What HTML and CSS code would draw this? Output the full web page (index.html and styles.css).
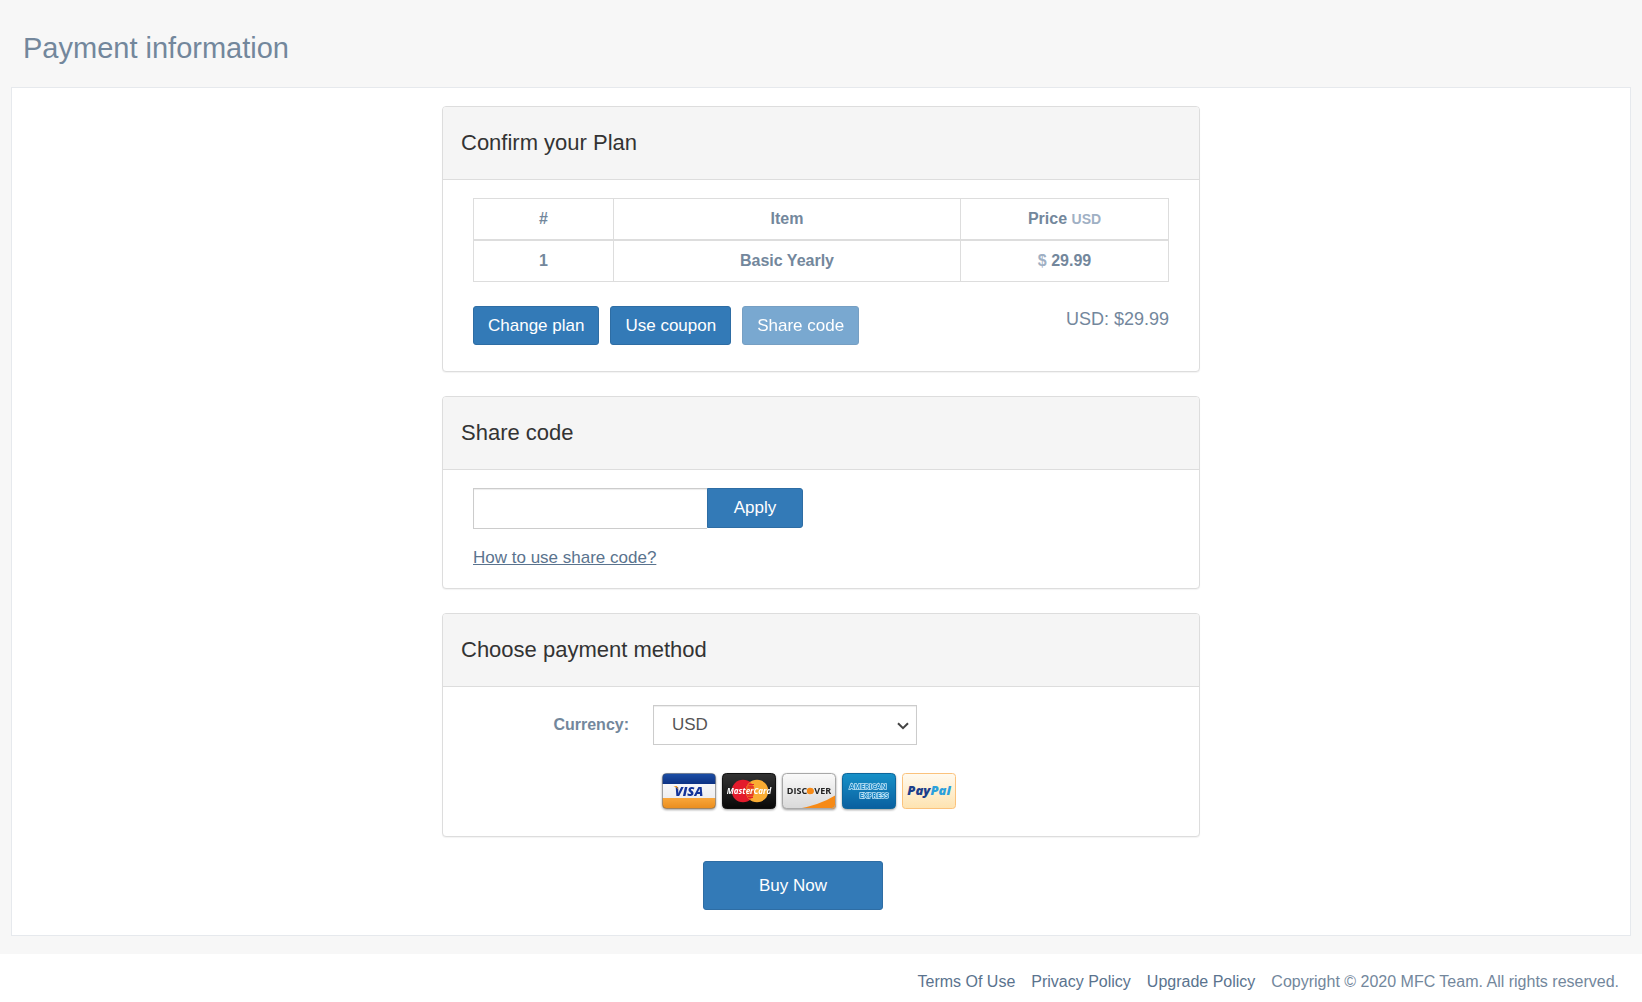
FILE: index.html
```html
<!DOCTYPE html>
<html lang="en">
<head>
<meta charset="utf-8">
<meta name="viewport" content="width=device-width, initial-scale=1">
<title>Payment information</title>
<link rel="stylesheet" href="styles.css">
</head>
<body>
<main class="page">
  <h1 class="page-title">Payment information</h1>
  <form class="panel">
    <section class="card">
      <h2 class="card-head">Confirm your Plan</h2>
      <div class="card-body">
        <table class="plan">
          <colgroup><col class="col-num"><col class="col-item"><col class="col-price"></colgroup>
          <thead>
            <tr><th>#</th><th>Item</th><th>Price <span class="unit">USD</span></th></tr>
          </thead>
          <tbody>
            <tr><td>1</td><td>Basic Yearly</td><td><span class="sign">$</span> 29.99</td></tr>
          </tbody>
        </table>
        <div class="plan-actions">
          <div class="buttons">
            <button type="button" class="btn">Change plan</button>
            <button type="button" class="btn">Use coupon</button>
            <button type="button" class="btn" disabled>Share code</button>
          </div>
          <p class="total">USD: $29.99</p>
        </div>
      </div>
    </section>

    <section class="card">
      <h2 class="card-head">Share code</h2>
      <div class="card-body share">
        <div class="code-row">
          <input type="text" class="code-input" aria-label="Share code">
          <button type="button" class="btn btn-apply">Apply</button>
        </div>
        <a href="#" class="help">How to use share code?</a>
      </div>
    </section>

    <section class="card">
      <h2 class="card-head">Choose payment method</h2>
      <div class="card-body method">
        <label class="currency-label" for="currency">Currency:</label>
        <div class="select-wrap">
          <select id="currency" class="currency"><option>USD</option></select>
          <svg class="chevron" viewBox="0 0 12 8" aria-hidden="true"><path d="M1 1.200 6 6.200 11 1.200" fill="none" stroke="#444" stroke-width="2"/></svg>
        </div>
        <div class="brands">
          <svg class="brand" viewBox="0 0 54 37" role="img" aria-label="Visa">
            <defs>
              <linearGradient id="vb" x2="0" y2="1"><stop stop-color="#1d50a8"/><stop offset="1" stop-color="#0c3283"/></linearGradient>
              <linearGradient id="vo" x2="0" y2="1"><stop stop-color="#f9a63a"/><stop offset="1" stop-color="#e98c1c"/></linearGradient>
              <linearGradient id="vw" x2="0" y2="1"><stop stop-color="#fff"/><stop offset="1" stop-color="#e6e6ea"/></linearGradient>
              <clipPath id="cc"><rect x=".5" y=".5" width="53" height="35" rx="4"/></clipPath>
            </defs>
            <g clip-path="url(#cc)">
              <path fill="url(#vw)" d="M0 0h54v36H0z"/>
              <path fill="url(#vb)" d="M0 0h54v11H0z"/>
              <path fill="url(#vo)" d="M0 25h54v11H0z"/>
            </g>
            <rect x=".5" y=".5" width="53" height="35" rx="4" fill="none" stroke="#555" stroke-opacity=".45"/>
            <text x="27" y="23" class="logo-visa">VISA</text>
            <path d="M11.500 13h3.500l1.500 4q-1.300-2.700-5-4" fill="#f39a1f"/>
          </svg>
          <svg class="brand" viewBox="0 0 54 37" role="img" aria-label="MasterCard">
            <defs><linearGradient id="mk" x2="0" y2="1"><stop stop-color="#333"/><stop offset="1" stop-color="#080808"/></linearGradient></defs>
            <rect x=".5" y=".5" width="53" height="35" rx="4" fill="url(#mk)" stroke="#111"/>
            <circle cx="21" cy="18" r="11.300" fill="#e31b2c"/>
            <circle cx="35" cy="18" r="11.300" fill="#f9ac33"/>
            <path d="M28 9.100a11.300 11.300 0 0 1 0 17.800 11.300 11.300 0 0 1 0-17.800" fill="#ea5a24"/>
            <path d="M27 11.500h5M26 14h6M25 22h6M26 24.500h5" stroke="#e31b2c" stroke-width="1"/>
            <text x="27" y="21" class="logo-mc">MasterCard</text>
          </svg>
          <svg class="brand" viewBox="0 0 54 37" role="img" aria-label="Discover">
            <defs><linearGradient id="dg" x2="0" y2="1"><stop stop-color="#fafafa"/><stop offset="1" stop-color="#d9d9d9"/></linearGradient></defs>
            <rect x=".5" y=".5" width="53" height="35" rx="4" fill="url(#dg)"/>
            <path d="M15 36Q38 32 54 22v10q0 4-4 4z" fill="#f68a16"/>
            <rect x=".5" y=".5" width="53" height="35" rx="4" fill="none" stroke="#a8a8a8"/>
            <text x="27" y="21" class="logo-disc">DISC<tspan fill="#f68a16">O</tspan>VER</text>
            <circle cx="28" cy="18" r="3.200" fill="#f68a16"/>
          </svg>
          <svg class="brand" viewBox="0 0 54 37" role="img" aria-label="American Express">
            <defs><linearGradient id="ab" x2="0" y2="1"><stop stop-color="#1791c8"/><stop offset="1" stop-color="#0a5f9f"/></linearGradient></defs>
            <rect x=".5" y=".5" width="53" height="35" rx="4" fill="url(#ab)" stroke="#0c669c"/>
            <text x="26" y="16" class="logo-amex">AMERICAN</text>
            <text x="32" y="25" class="logo-amex">EXPRESS</text>
          </svg>
          <svg class="brand" viewBox="0 0 54 37" role="img" aria-label="PayPal">
            <defs><linearGradient id="pp" x2="0" y2="1"><stop stop-color="#fffaf0"/><stop offset="1" stop-color="#fee3b0"/></linearGradient></defs>
            <rect x=".5" y=".5" width="53" height="35" rx="3" fill="url(#pp)" stroke="#fbc27c"/>
            <text x="27" y="22" class="logo-pp">Pay<tspan fill="#2aa0dc">Pal</tspan></text>
          </svg>
        </div>
      </div>
    </section>
    <div class="submit"><button type="submit" class="btn btn-buy">Buy Now</button></div>
  </form>
</main>
<footer class="footer">
  <a href="#">Terms Of Use</a>
  <a href="#">Privacy Policy</a>
  <a href="#">Upgrade Policy</a>
  <span class="copy">Copyright © 2020 MFC Team. All rights reserved.</span>
</footer>
</body>
</html>
```
FILE: styles.css
```css
* { box-sizing: border-box; }

body {
  margin: 0;
  background: #fff;
  color: #73879c;
  font: 17px/24px "Liberation Sans", Arial, sans-serif;
}

.page {
  padding: 0 11px 18px;
  background: #f7f7f7;
}

.page-title {
  margin: 0;
  padding: 32px 12px 23px;
  font-size: 29px;
  line-height: 32px;
  font-weight: 400;
}

.panel {
  display: flex;
  flex-direction: column;
  align-items: center;
  gap: 24px;
  padding: 18px 18px 25px;
  background: #fff;
  border: 1px solid #e6e9ed;
}

.card {
  width: 100%;
  max-width: 758px;
  background: #fff;
  border: 1px solid #ddd;
  border-radius: 4px;
  box-shadow: 0 1px 1px rgba(0, 0, 0, .05);
}

.card-head {
  margin: 0;
  padding: 24px 18px;
  background: #f5f5f5;
  border-bottom: 1px solid #ddd;
  border-radius: 3px 3px 0 0;
  color: #333;
  font-size: 22px;
  line-height: 24px;
  font-weight: 400;
}

.card-body { padding: 18px 30px 26px; }

.plan {
  width: 100%;
  table-layout: fixed;
  border-collapse: collapse;
  font-size: 16px;
  line-height: 24px;
  font-weight: 700;
  text-align: center;
}

.col-num { width: 140px; }
.col-price { width: 208px; }

.plan th,
.plan td {
  padding: 8px;
  border: 1px solid #ddd;
}

.plan th { border-bottom-width: 2px; }

.unit {
  color: #9fb0c4;
  font-size: 14px;
}

.sign { color: #9fb0c4; }

.plan-actions {
  display: flex;
  justify-content: space-between;
  margin-top: 24px;
}

.buttons {
  display: flex;
  flex-wrap: wrap;
  gap: 11px;
}

.total {
  margin: 0;
  font-size: 18px;
  line-height: 26px;
}

.btn {
  padding: 0 14px;
  height: 39px;
  background: #337ab7;
  border: 1px solid #2e6da4;
  border-radius: 3px;
  color: #fff;
  font: inherit;
  cursor: pointer;
}

.btn:disabled {
  opacity: .65;
  cursor: default;
}

.share { padding-bottom: 18px; }

.code-row {
  display: flex;
  align-items: flex-start;
  margin-bottom: 17px;
}

.code-input {
  width: 234px;
  height: 41px;
  padding: 6px 12px;
  border: 1px solid #ccc;
  border-right: 0;
  border-radius: 0;
  box-shadow: inset 0 1px 1px rgba(0, 0, 0, .075);
  font: inherit;
}

.btn-apply {
  width: 96px;
  height: 40px;
  border-radius: 0 3px 3px 0;
}

.help {
  color: #5a738e;
}

.method {
  display: grid;
  grid-template-columns: 156px 1fr;
  column-gap: 24px;
  row-gap: 28px;
}

.currency-label {
  font-size: 16px;
  line-height: 40px;
  font-weight: 700;
  text-align: right;
}

.select-wrap {
  position: relative;
  width: 264px;
  height: 40px;
}

.currency {
  appearance: none;
  width: 100%;
  height: 100%;
  padding: 0 18px;
  background: #fff;
  border: 1px solid #ccc;
  border-radius: 0;
  box-shadow: inset 0 1px 1px rgba(0, 0, 0, .075);
  color: #555;
  font: inherit;
}

.chevron {
  position: absolute;
  right: 8px;
  top: 17px;
  width: 12px;
  height: 8px;
  pointer-events: none;
}

.brands {
  grid-column: 2;
  display: flex;
  gap: 6px;
  padding-left: 9px;
}

.brand {
  width: 54px;
  height: 37px;
  filter: drop-shadow(0 1px 1px rgba(0, 0, 0, .4));
}

.brand:last-child { filter: none; }

.brand text {
  text-anchor: middle;
  font-family: "Open Sans", sans-serif;
  font-weight: 800;
}

.brand .logo-visa { font-size: 13px; font-style: italic; fill: #14349a; }
.brand .logo-mc { font-size: 8px; font-weight: 700; font-style: italic; fill: #fff; }
.brand .logo-disc { font-size: 9px; font-weight: 700; fill: #222; }
.brand .logo-amex {
  font-size: 7px;
  font-weight: 700;
  fill: #1a86c4;
  stroke: #c4e6f7;
  stroke-width: 1.4px;
  paint-order: stroke;
}
.brand .logo-pp { font-size: 13px; font-style: italic; fill: #1c3f8b; }

.submit {
  width: 100%;
  max-width: 758px;
  display: flex;
  padding-left: 261px;
}

.btn-buy {
  width: 180px;
  height: 49px;
}

.footer {
  display: flex;
  justify-content: flex-end;
  flex-wrap: wrap;
  gap: 16px;
  padding: 16px 23px 8px;
  font-size: 16px;
}

.footer a {
  color: #5a738e;
  text-decoration: none;
}
```
